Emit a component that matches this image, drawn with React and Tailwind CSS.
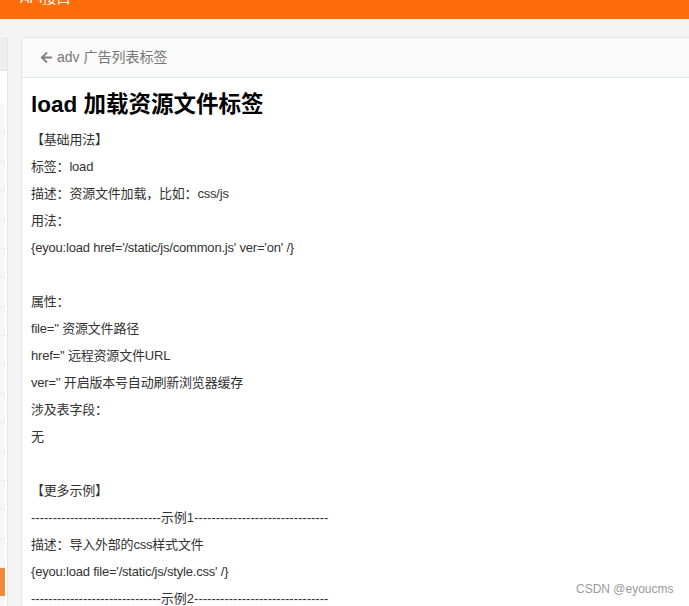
import React from 'react';
import { FaArrowLeft } from 'react-icons/fa';

const font = { fontFamily: '"Liberation Sans", Arial, "Noto Sans CJK SC", sans-serif' };

const dashes = (n) => '-'.repeat(n);

const lines = [
    '【基础用法】',
    '标签：load',
    '描述：资源文件加载，比如：css/js',
    '用法：',
    "{eyou:load href='/static/js/common.js' ver='on' /}",
    '',
    '属性：',
    "file='' 资源文件路径",
    "href='' 远程资源文件URL",
    "ver='' 开启版本号自动刷新浏览器缓存",
    '涉及表字段：',
    '无',
    '',
    '【更多示例】',
    dashes(30) + '示例1' + dashes(31),
    '描述：导入外部的css样式文件',
    "{eyou:load file='/static/js/style.css' /}",
    dashes(30) + '示例2' + dashes(31),
];

const Sidebar = () => (
    <div className="w-[8px] shrink-0 flex flex-col border-r border-[#e6e6e6] bg-white">
        <div className="h-[34px] bg-[#eeeeee] border-b border-[#e2e2e2]" />
        <div className="h-[33px] bg-white" />
        <div className="w-[5px] flex-1 bg-[#f7f7f7] flex flex-col">
            {Array.from({ length: 16 }).map((_, i) => (
                <div key={i} className="h-[29px] shrink-0 border-b border-[#ececec]" />
            ))}
            <div className="h-[28px] shrink-0 bg-[#f28a3c]" />
        </div>
    </div>
);

export default function App() {
    return (
        <div className="w-[689px] h-[606px] overflow-hidden bg-[#f4f4f4] flex flex-col relative" style={font}>
            {/* top bar */}
            <div className="h-[19px] shrink-0 bg-[#ff6d0a] overflow-hidden">
                <div className="pl-[20px] -mt-[12px] text-[14px] leading-[20px] text-white">API接口</div>
            </div>

            <div className="flex-1 flex pt-[18px] gap-[13px] min-h-0">
                <Sidebar />

                {/* main panel */}
                <div className="flex-1 flex flex-col bg-white border-l border-t border-[#e6e6e6] min-w-0">
                    <div className="h-[40px] shrink-0 bg-[#fafafa] border-b border-[#e3e7ee] flex items-center pl-[18px] gap-[4px] text-[14px] text-[#777777]">
                        <FaArrowLeft className="w-[13px] h-[13px] text-[#808080]" />
                        <span>adv 广告列表标签</span>
                    </div>
                    <div className="pl-[9px] pt-[12px] text-[#333333]">
                        <h1 className="text-[22.5px] leading-[30px] font-bold text-black mb-[6px]">load 加载资源文件标签</h1>
                        {lines.map((t, i) => (
                            <p
                                key={i}
                                className={t.startsWith('---') ? 'h-[27px] text-[13px] leading-[27px] whitespace-nowrap' : 'h-[27px] text-[13px] leading-[27px] whitespace-nowrap tracking-[-0.2px]'}
                            >
                                {t}
                            </p>
                        ))}
                    </div>
                </div>
            </div>

            <div className="absolute left-[576px] top-[581px] text-[12px] leading-[16px] text-[#9a9a9a]">CSDN @eyoucms</div>
        </div>
    );
}
